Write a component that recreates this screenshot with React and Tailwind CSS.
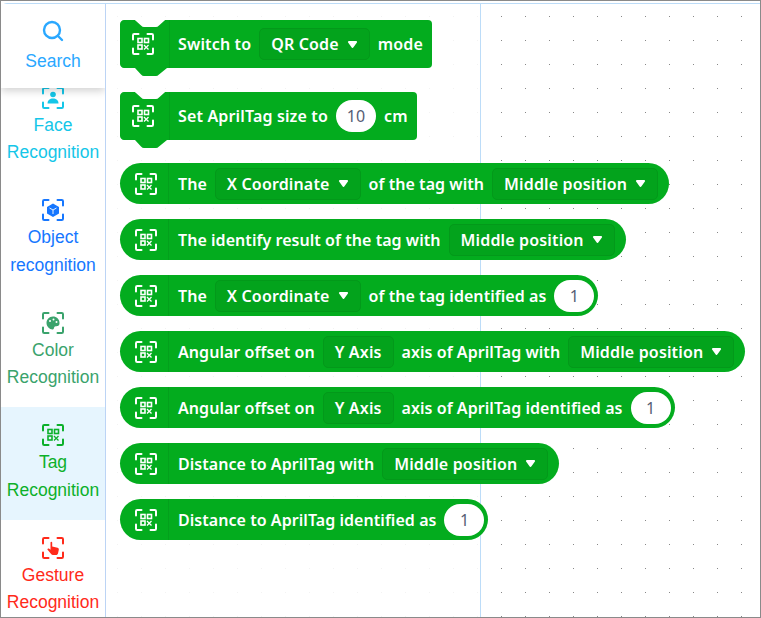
import React from 'react';

const FONT = "font-['Liberation_Sans',Arial,sans-serif]";
const BLOCK_FONT = "font-['Noto_Sans',sans-serif]";

// scan frame shared by all the category icons
function ScanIcon({ className, children }) {
  return (
    <svg viewBox="0 0 22 22" width="22" height="22" fill="none" className={className}>
      <path
        d="M1 6.5V2.2C1 1.5 1.5 1 2.2 1H6.5M15.5 1H19.8C20.5 1 21 1.5 21 2.2V6.5M21 15.5V19.8C21 20.5 20.5 21 19.8 21H15.5M6.5 21H2.2C1.5 21 1 20.5 1 19.8V15.5"
        stroke="currentColor"
        strokeWidth="2"
        strokeLinecap="round"
      />
      {children}
    </svg>
  );
}

function QrMark() {
  return (
    <g stroke="currentColor" strokeWidth="1.6">
      <rect x="6" y="5.5" width="4" height="4" />
      <rect x="12.5" y="5.5" width="4" height="4" />
      <rect x="6" y="12" width="4" height="4" />
      <path d="M12 12L13.7 13.7M16.5 12L12 16.5M14.5 14.5L16.5 16.5" strokeWidth="1.3" />
    </g>
  );
}

const CATEGORIES = [
  {
    label: ['Face', 'Recognition'],
    color: 'text-[#14c6e8]',
    mark: (
      <g fill="currentColor">
        <circle cx="11" cy="7.5" r="2.8" />
        <path d="M5.5 16.5C5.5 13 8 11.5 11 11.5S16.5 13 16.5 16.5Z" />
      </g>
    ),
  },
  {
    label: ['Object', 'recognition'],
    color: 'text-[#1677ff]',
    mark: (
      <g>
        <path d="M11 4.5L17 8V14.5L11 18L5 14.5V8Z" fill="currentColor" />
        <path d="M7.5 9L11 11L14.5 9M11 11V15" stroke="#fff" strokeWidth="0.9" />
      </g>
    ),
  },
  {
    label: ['Color', 'Recognition'],
    color: 'text-[#3aa36c]',
    mark: (
      <g>
        <path d="M11 4.5C7 4.5 4.5 7.5 4.5 11C4.5 14.5 7.5 17.5 10.5 17.5C12.5 17.5 11.5 15 13 14.5C15 14 17.5 14.5 17.5 11C17.5 7 14.5 4.5 11 4.5Z" fill="currentColor" />
        <circle cx="8" cy="9" r="1" fill="#fff" />
        <circle cx="11.5" cy="7.5" r="1" fill="#fff" />
        <circle cx="14.5" cy="10" r="1" fill="#fff" />
      </g>
    ),
  },
  { label: ['Tag', 'Recognition'], color: 'text-[#0cb02a]', active: true, mark: <QrMark /> },
  {
    label: ['Gesture', 'Recognition'],
    color: 'text-[#ff2a1a]',
    mark: (
      <path
        d="M8.5 5.5C8.5 4.6 10.2 4.6 10.2 5.5V9.5L15.5 10.8C16.5 11 17 11.8 16.8 12.8L16 16.5C15.8 17.4 15 18 14 18H11C10.2 18 9.6 17.7 9.1 17L5.6 12.8C5 12 6 11 6.9 11.6L8.5 12.8Z"
        fill="currentColor"
      />
    ),
  },
];

function Field({ children, plain }) {
  return (
    <span className="flex h-8 items-center gap-2 rounded-[5px] border border-[#03991a] bg-[#03a31c] px-[11px] tracking-[0.15px]">
      {children}
      {!plain && (
        <svg viewBox="0 0 12 10" width="11" height="9">
          <path d="M2 2.2H10L6 7.8Z" fill="#fff" stroke="#fff" strokeWidth="2.2" strokeLinejoin="round" />
        </svg>
      )}
    </span>
  );
}

function NumberInput({ value }) {
  return (
    <span className="flex h-8 w-10 items-center justify-center rounded-full bg-white text-[16px] font-normal text-[#575e75]">
      {value}
    </span>
  );
}

function Parts({ parts }) {
  return parts.map((p, i) => {
    if (p.field) return <Field key={i} plain={p.plain}>{p.field}</Field>;
    if (p.input) return <NumberInput key={i} value={p.input} />;
    return <span key={i}>{p}</span>;
  });
}

function HatBlock({ parts }) {
  return (
    <div className={`flex h-14 items-start text-[16px] font-semibold tracking-[0.15px] text-white ${BLOCK_FONT}`}>
      <div className="relative h-14 w-[49px] shrink-0">
        <svg viewBox="0 0 49 56" width="49" height="56" className="absolute inset-0">
          <path
            d="M4 0H14C15 0 15.5 .5 16 1L21 5.5C22 6.5 23 7 24 7H36C37 7 38 6.5 39 5.5L44 1C44.5 .5 45 0 46 0H49V48H47L39 54.5C38 55.5 37 56 36 56H24C23 56 22 55.5 21 54.5L15 48H4C2 48 0 46 0 44V4C0 2 2 0 4 0Z"
            fill="#03ac1e"
          />
        </svg>
        <ScanIcon className="absolute left-[12px] top-[13px] text-white">
          <QrMark />
        </ScanIcon>
      </div>
      <div className="flex h-12 items-center gap-2 rounded-r-[4px] border-l border-[#03a01c] bg-[#03ac1e] pl-2 pr-[9px]">
        <Parts parts={parts} />
      </div>
    </div>
  );
}

function RoundBlock({ parts, inputEnd }) {
  return (
    <div className={`flex h-[41px] w-fit items-center rounded-full bg-[#03ac1e] text-[16px] font-semibold tracking-[0.05px] text-white ${BLOCK_FONT}`}>
      <div className="flex h-full w-[49px] shrink-0 items-center justify-end border-r border-[#03a01c] pr-[11px]">
        <ScanIcon className="text-white">
          <QrMark />
        </ScanIcon>
      </div>
      <div className={`flex items-center gap-2 pl-[9px] ${inputEnd ? 'pr-1' : 'pr-[11px]'}`}>
        <Parts parts={parts} />
      </div>
    </div>
  );
}

export default function App() {
  return (
    <div className={`h-[618px] w-[761px] overflow-hidden border border-[#8a8a8a] bg-white pt-[2px] ${FONT}`}>
      <div className="flex h-full rounded-tl-md border-t border-[#bcdcf8]">
        {/* Category list */}
        <div className="relative h-full w-[105px] shrink-0 overflow-hidden border-r border-[#bcd4f5]">
          <div className="absolute inset-x-0 top-0 z-10 flex h-[84px] flex-col items-center bg-white pt-[16px] text-[#2aa8ff] shadow-[0_3px_8px_rgba(0,0,0,0.18)]">
            <svg viewBox="0 0 22 22" width="22" height="22" fill="none" stroke="currentColor" strokeWidth="2.4" strokeLinecap="round">
              <circle cx="10" cy="10" r="8" />
              <path d="M16 16L20 20" />
            </svg>
            <span className="mt-[7px] text-[17.5px] leading-[24px]">Search</span>
          </div>
          <div className="pt-[65.5px]">
            {CATEGORIES.map((c) => (
              <div
                key={c.label[1] + c.label[0]}
                className={`flex h-[112.5px] flex-col items-center pt-[17px] ${c.color} ${c.active ? 'bg-[#e6f5fe]' : ''}`}
              >
                <ScanIcon>{c.mark}</ScanIcon>
                <span className="mt-[3px] text-center text-[17.5px] leading-[27.5px]">
                  {c.label[0]}
                  <br />
                  {c.label[1]}
                </span>
              </div>
            ))}
          </div>
        </div>

        {/* Workspace with dotted grid */}
        <div className="h-full min-w-0 flex-1 bg-[radial-gradient(circle_at_0.5px_0.5px,#888_0.7px,transparent_0.8px)] bg-[size:24px_24px] bg-[position:11px_12px]">
          <div className="h-full w-[375px] border-r border-[#bcdcf8] bg-white/90 pl-[14px] pt-[16px]">
            <div className="flex w-[640px] flex-col gap-4">
              <HatBlock parts={['Switch to', { field: 'QR Code' }, 'mode']} />
              <HatBlock parts={['Set AprilTag size to', { input: '10' }, 'cm']} />
            </div>
            <div className="mt-[15px] flex w-[640px] flex-col gap-[15px]">
              <RoundBlock parts={['The', { field: 'X Coordinate' }, 'of the tag with', { field: 'Middle position' }]} />
              <RoundBlock parts={['The identify result of the tag with', { field: 'Middle position' }]} />
              <RoundBlock inputEnd parts={['The', { field: 'X Coordinate' }, 'of the tag identified as', { input: '1' }]} />
              <RoundBlock parts={['Angular offset on', { field: 'Y Axis', plain: true }, 'axis of AprilTag with', { field: 'Middle position' }]} />
              <RoundBlock inputEnd parts={['Angular offset on', { field: 'Y Axis', plain: true }, 'axis of AprilTag identified as', { input: '1' }]} />
              <RoundBlock parts={['Distance to AprilTag with', { field: 'Middle position' }]} />
              <RoundBlock inputEnd parts={['Distance to AprilTag identified as', { input: '1' }]} />
            </div>
          </div>
        </div>
      </div>
    </div>
  );
}
